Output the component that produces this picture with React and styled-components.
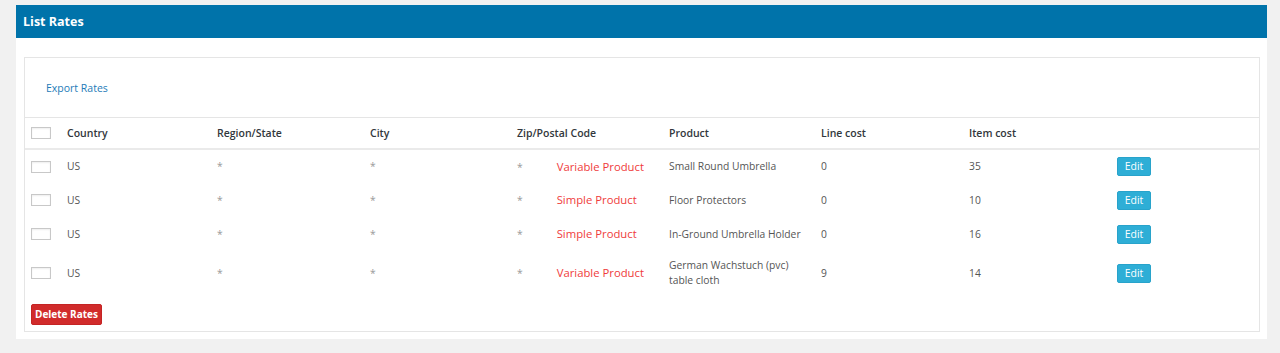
import React from "react";
import styled, { createGlobalStyle } from "styled-components";

const rates = [
  { country: "US", kind: "Variable Product", product: ["Small Round Umbrella"], line: "0", item: "35" },
  { country: "US", kind: "Simple Product", product: ["Floor Protectors"], line: "0", item: "10" },
  { country: "US", kind: "Simple Product", product: ["In-Ground Umbrella Holder"], line: "0", item: "16" },
  { country: "US", kind: "Variable Product", product: ["German Wachstuch (pvc)", "table cloth"], line: "9", item: "14" },
];

const cols = [36, 150, 153, 147, 152, 152, 148, 148, 149];

const App = () => {
  return (
    <Page>
      <GlobalStyle />
      <Panel>
        <PanelHeader>List Rates</PanelHeader>
        <Card>
          <Toolbar>
            <ExportLink href="#">Export Rates</ExportLink>
          </Toolbar>
          <Table>
            <colgroup>
              {cols.map((w, i) => (
                <col key={i} style={{ width: w }} />
              ))}
            </colgroup>
            <thead>
              <tr>
                <Th>
                  <Check />
                </Th>
                <Th>Country</Th>
                <Th>Region/State</Th>
                <Th>City</Th>
                <Th>Zip/Postal Code</Th>
                <Th>Product</Th>
                <Th>Line cost</Th>
                <Th>Item cost</Th>
                <Th />
              </tr>
            </thead>
            <tbody>
              {rates.map((r, i) => (
                <Row key={i} tall={r.product.length > 1}>
                  <Td>
                    <Check />
                  </Td>
                  <Td>{r.country}</Td>
                  <Td>
                    <Star>*</Star>
                  </Td>
                  <Td>
                    <Star>*</Star>
                  </Td>
                  <Td>
                    <Star>*</Star>
                    <Kind>{r.kind}</Kind>
                  </Td>
                  <Td>
                    {r.product.map((p, j) => (
                      <div key={j}>{p}</div>
                    ))}
                  </Td>
                  <Td>{r.line}</Td>
                  <Td>{r.item}</Td>
                  <Td>
                    <EditButton>Edit</EditButton>
                  </Td>
                </Row>
              ))}
            </tbody>
          </Table>
          <Footer>
            <DeleteButton>Delete Rates</DeleteButton>
          </Footer>
        </Card>
      </Panel>
    </Page>
  );
};

const GlobalStyle = createGlobalStyle`
  body {
    margin: 0;
    background: #f1f1f1;
    font-family: "Open Sans", "Noto Sans", sans-serif;
  }
`;

const Page = styled.div`
  padding: 5px 13px 14px 16px;
`;

const Panel = styled.div`
  background: #fff;
  padding-bottom: 7px;
`;

const PanelHeader = styled.div`
  background: #0073aa;
  color: #fff;
  font-weight: 700;
  font-size: 12.5px;
  height: 33px;
  line-height: 33px;
  padding-left: 7px;
`;

const Card = styled.div`
  margin: 19px 7px 0 8px;
  border: 1px solid #e5e5e5;
  background: #fff;
`;

const Toolbar = styled.div`
  height: 59px;
  display: flex;
  align-items: center;
  padding-left: 21px;
`;

const ExportLink = styled.a`
  color: #1e7bb8;
  font-size: 10.5px;
  text-decoration: none;
`;

const Table = styled.table`
  width: 100%;
  table-layout: fixed;
  border-collapse: collapse;
  font-size: 10.3px;
  color: #555;
`;

const Th = styled.th`
  text-align: left;
  font-weight: 600;
  font-size: 10.5px;
  color: #32373c;
  height: 30px;
  padding: 0 0 0 6px;
  border-top: 1px solid #e5e5e5;
  border-bottom: 2px solid #eaeaea;
  vertical-align: middle;
`;

const Row = styled.tr`
  height: ${(p) => (p.tall ? "44px" : "34px")};
`;

const Td = styled.td`
  padding: 0 0 0 6px;
  vertical-align: middle;
  line-height: 15px;
`;

const Check = styled.span`
  display: block;
  width: 18px;
  height: 10px;
  border: 1px solid #c8c8c8;
  background: #fff;
  box-shadow: inset 0 1px 2px rgba(0, 0, 0, 0.07);
`;

const Star = styled.span`
  color: #999;
`;

const Kind = styled.span`
  color: #ef3b3b;
  font-size: 11.3px;
  margin-left: 34px;
`;

const EditButton = styled.button`
  background: #2eaed6;
  border: 1px solid #28a3cb;
  border-radius: 2px;
  color: #fff;
  font-family: inherit;
  font-size: 10.5px;
  width: 34px;
  height: 19px;
  padding: 0;
  line-height: 17px;
`;

const Footer = styled.div`
  padding: 6px 0 6px 6px;
`;

const DeleteButton = styled.button`
  background: #d12b2b;
  border: 1px solid #c42424;
  border-radius: 2px;
  color: #fff;
  font-family: inherit;
  font-weight: 700;
  font-size: 10px;
  height: 21px;
  width: 71px;
  padding: 0;
`;

export default App;
